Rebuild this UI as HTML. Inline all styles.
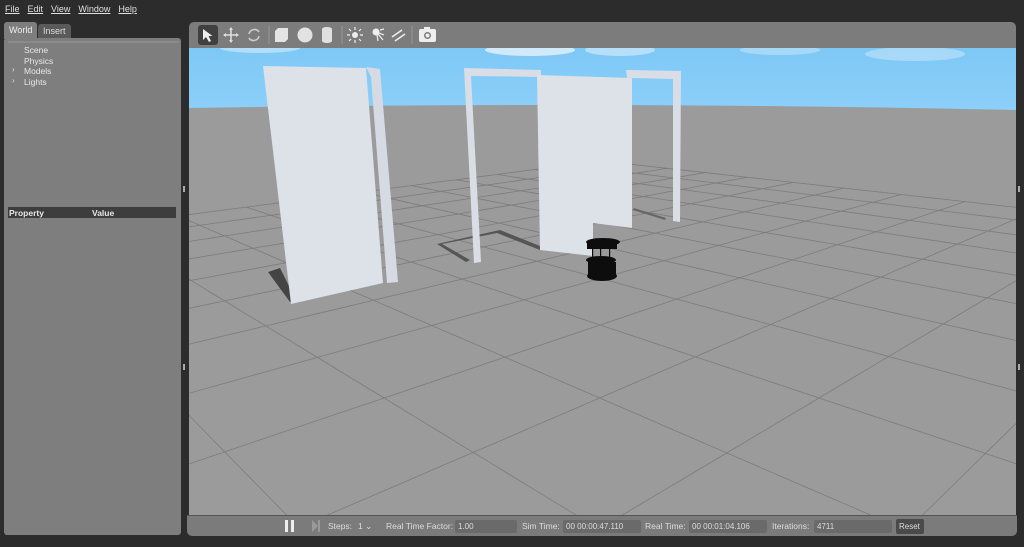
<!DOCTYPE html>
<html style="overflow:hidden;width:1024px;height:547px"><head><meta charset="utf-8"><style>
*{margin:0;padding:0;box-sizing:border-box}
body{width:1024px;height:547px;background:#2c2c2c;font-family:"Liberation Sans","DejaVu Sans",sans-serif;position:relative;overflow:hidden;color:#ddd}
.menu{position:absolute;top:4px;left:5px;font-size:9px;color:#e0e0e0}
.menu span{margin-right:8px;text-decoration:underline;text-decoration-thickness:0px;text-underline-offset:1px}
.abs{position:absolute}
.tab{position:absolute;top:22px;height:17px;font-size:9px;padding:3px 5px;border-radius:3px 3px 0 0}
.lp{left:4px;top:38px;width:177px;height:497px;background:#7e7e7e;border-radius:3px}
.tree{font-size:8.5px;color:#e8e8e8;line-height:10.5px;position:absolute;left:24px;top:45px}
.tb{left:189px;top:22px;width:827px;height:26px;background:#7c7c7c;border-radius:5px 5px 0 0}
.bb{left:187px;top:515px;width:830px;height:21px;background:#7b7b7b;border-top:1px solid #555;border-radius:0 0 5px 5px;font-size:8.5px;color:#ddd;overflow:hidden}
.fld{position:absolute;top:4px;height:13px;background:#6a6a6a;border-radius:2px;font-size:8px;color:#ddd;padding:2px 3px}
.lbl{position:absolute;top:5px}
</style></head><body>
<div class="menu"><span>File</span><span>Edit</span><span>View</span><span>Window</span><span>Help</span></div>
<div class="tab" style="left:4px;background:#7e7e7e;color:#eee">World</div>
<div class="tab" style="left:38px;background:#5a5a5a;color:#ddd;top:24px;height:15px;padding-top:2px">Insert</div>
<div class="abs lp"></div>
<div class="abs" style="left:8px;top:41px;width:171px;height:2px;background:#8a8a8a"></div>
<div class="tree">Scene<br>Physics<br>Models<br>Lights</div>
<div class="abs" style="left:12px;top:65px;font-size:8px;color:#ddd;line-height:10.5px">›<br>›</div>
<div class="abs" style="left:8px;top:207px;width:168px;height:11px;background:#3d3d3d;font-size:8.5px;font-weight:bold;color:#e8e8e8;padding:1px 1px"><span>Property</span><span style="position:absolute;left:84px">Value</span></div>
<div class="abs" style="left:183px;top:186px;width:2px;height:6px;background:#aaa"></div>
<div class="abs" style="left:183px;top:364px;width:2px;height:6px;background:#aaa"></div>
<div class="abs" style="left:1018px;top:186px;width:2px;height:6px;background:#aaa"></div>
<div class="abs" style="left:1018px;top:364px;width:2px;height:6px;background:#aaa"></div>
<div class="abs tb">
<svg width="260" height="26" style="position:absolute;left:0;top:0">
<rect x="9" y="3" width="20" height="20" rx="3" fill="#404040"/>
<path d="M14 7 L14 18 L17 15 L20 20 L22 19 L19.5 14 L23.5 14 Z" fill="#eee"/>
<g stroke="#ddd" stroke-width="1.6" fill="#ddd"><path d="M42 6 V20 M35 13 H49" fill="none"/><path d="M42 5l-2 3h4zM42 21l-2-3h4zM34 13l3-2v4zM50 13l-3-2v4z" stroke="none"/></g>
<path d="M70 10 A5.5 5.5 0 0 0 60 12 M60 16 A5.5 5.5 0 0 0 70 14" stroke="#ccc" stroke-width="1.6" fill="none"/>
<line x1="80" y1="4" x2="80" y2="22" stroke="#999"/>
<path d="M86 9 l3-3 h10 v11 l-3 3 h-10z" fill="#e4e4e4"/>
<circle cx="116" cy="13" r="7.5" fill="#e2e2e2"/>
<path d="M133 7 a5 2 0 0 1 10 0 v12 a5 2 0 0 1 -10 0z" fill="#e0e0e0"/>
<line x1="153" y1="4" x2="153" y2="22" stroke="#999"/>
<circle cx="166" cy="13" r="3" fill="#eee"/><g stroke="#eee" stroke-width="1.2"><path d="M166 5v3M166 18v3M158 13h3M171 13h3M160 7l2 2M170 17l2 2M160 19l2-2M170 9l2-2"/></g>
<circle cx="187" cy="10" r="3.5" fill="#eee"/><g stroke="#eee" stroke-width="1.2"><path d="M189 12l5 6M190 11l5 2M188 13l1 6M191 8l4-1"/></g>
<g stroke="#eee" stroke-width="1.6"><path d="M203 15l10-7M206 19l10-7"/></g>
<line x1="223" y1="4" x2="223" y2="22" stroke="#999"/>
<rect x="230" y="7" width="17" height="13" rx="2" fill="#eee"/><rect x="235" y="5" width="6" height="3" fill="#eee"/><circle cx="238.5" cy="13.5" r="3.5" fill="#7c7c7c"/><circle cx="238.5" cy="13.5" r="2" fill="#eee"/>
</svg></div>
<svg class="abs" id="scene" style="left:189px;top:48px" width="827" height="467" viewBox="189 48 827 467">
<defs><linearGradient id="sky" x1="0" y1="0" x2="0" y2="1"><stop offset="0" stop-color="#7ec8f6"/><stop offset="1" stop-color="#8dd0fa"/></linearGradient>
<clipPath id="vc"><rect x="189" y="48" width="827" height="467"/></clipPath></defs>
<g clip-path="url(#vc)">
<rect x="189" y="48" width="827" height="70" fill="url(#sky)"/>
<ellipse cx="260" cy="48" rx="40" ry="5" fill="#e8f4fc" opacity=".5"/>
<ellipse cx="530" cy="50" rx="45" ry="6" fill="#f2f8fc" opacity=".7"/>
<ellipse cx="620" cy="50" rx="35" ry="6" fill="#eef6fc" opacity=".5"/>
<ellipse cx="780" cy="50" rx="40" ry="5" fill="#e4f2fb" opacity=".4"/>
<ellipse cx="915" cy="54" rx="50" ry="7" fill="#e4f2fb" opacity=".4"/>
<path d="M189 108 Q600 101 1016 110 L1016 515 L189 515Z" fill="#9b9b9b"/>
<g id="grid" stroke="#7c7c7c" stroke-width="0.8" fill="none"></g>
<path d="M268 272 L290 302 L296 300 L280 268Z" fill="#444"/>
<path d="M437 244 L466 262 L470 260 L442 244 L497 233 L540 250 L540 246 L500 230Z" fill="#555"/>
<path d="M633 210 L665 220 L666 218 L634 208Z" fill="#666"/>
<path d="M263 66 L366 68 L383 283 L291 304Z" fill="#dde1e8"/>
<path d="M366 67 L380 69 L398 282 L387 283 L371 77Z" fill="#d6dae3"/>
<path d="M464 68 L541 70 L541 77 L471 76 L481 262 L474 263Z" fill="#d9dde6"/>
<path d="M537 75 L632 78 L632 228 L593 223 L593 256 L540 250Z" fill="#dde1e8"/>
<path d="M626 70 L681 71 L680 222 L673 221 L673 79 L627 78Z" fill="#d9dde6"/>
<g fill="#0d0d0d"><ellipse cx="603" cy="242" rx="17" ry="4"/><rect x="587" y="243" width="30" height="6"/><ellipse cx="601" cy="260" rx="15" ry="4"/><rect x="588" y="262" width="28" height="14"/><ellipse cx="602" cy="276" rx="15" ry="5"/>
<rect x="592" y="247" width="1.2" height="13"/><rect x="600" y="247" width="1.2" height="13"/><rect x="609" y="247" width="1.2" height="13"/></g>
</g></svg>
<div class="abs bb">
<div class="abs" style="left:98px;top:4px;width:3px;height:12px;background:#eee"></div>
<div class="abs" style="left:104px;top:4px;width:3px;height:12px;background:#eee"></div>
<div class="abs" style="left:125px;top:4px;width:0;height:0;border-left:6px solid #999;border-top:6px solid transparent;border-bottom:6px solid transparent"></div>
<div class="abs" style="left:131px;top:4px;width:2px;height:12px;background:#999"></div>
<span class="lbl" style="left:141px">Steps:</span><span class="lbl" style="left:171px">1 ⌄</span>
<span class="lbl" style="left:199px">Real Time Factor:</span><div class="fld" style="left:268px;width:62px">1.00</div>
<span class="lbl" style="left:335px">Sim Time:</span><div class="fld" style="left:376px;width:78px">00 00:00:47.110</div>
<span class="lbl" style="left:458px">Real Time:</span><div class="fld" style="left:502px;width:78px">00 00:01:04.106</div>
<span class="lbl" style="left:585px">Iterations:</span><div class="fld" style="left:627px;width:78px">4711</div>
<div class="fld" style="left:709px;top:3px;height:15px;width:28px;background:#4a4a4a;padding-top:3px">Reset</div>
</div>
<script>
(function(){
var src=[[0,0],[2,0],[0,2],[2,2]],dst=[[600,325],[819,398],[384,398],[599,529]];
var A=[],b=[];
for(var i=0;i<4;i++){var u=src[i][0],v=src[i][1],x=dst[i][0],y=dst[i][1];
A.push([u,v,1,0,0,0,-u*x,-v*x]);b.push(x);A.push([0,0,0,u,v,1,-u*y,-v*y]);b.push(y);}
var n=8;for(var c=0;c<n;c++){var p=c;for(var r=c+1;r<n;r++)if(Math.abs(A[r][c])>Math.abs(A[p][c]))p=r;
var t=A[c];A[c]=A[p];A[p]=t;t=b[c];b[c]=b[p];b[p]=t;
for(var r=0;r<n;r++)if(r!=c){var f=A[r][c]/A[c][c];for(var k=c;k<n;k++)A[r][k]-=f*A[c][k];b[r]-=f*b[c];}}
var h=[];for(var i=0;i<n;i++)h.push(b[i]/A[i][i]);
function P(u,v){var w=h[6]*u+h[7]*v+1;return [(h[0]*u+h[1]*v+h[2])/w,(h[3]*u+h[4]*v+h[5])/w,w];}
var g=document.getElementById('grid'),s='',L=-8,H=6;
function seg(a,b2){var d='';var N=60;for(var j=0;j<=N;j++){var t=j/N;var u=a[0]+(b2[0]-a[0])*t,v=a[1]+(b2[1]-a[1])*t;var q=P(u,v);if(q[2]<=0.05){continue;}d+=(d?'L':'M')+q[0].toFixed(1)+' '+q[1].toFixed(1);}return d;}
for(var k=L;k<=H;k++){s+='<path d="'+seg([k,L],[k,H])+'"/>';s+='<path d="'+seg([L,k],[H,k])+'"/>';}
g.innerHTML=s;
})();
</script>
</body></html>
